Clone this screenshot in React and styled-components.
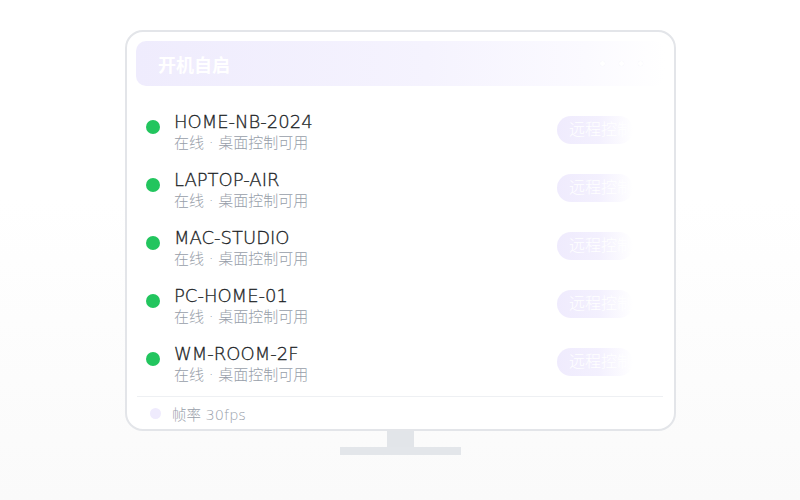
import React from "react";
import styled, { createGlobalStyle } from "styled-components";

const GlobalStyle = createGlobalStyle`
  html, body {
    margin: 0;
    padding: 0;
  }
  body {
    background: linear-gradient(180deg, #ffffff 0%, #ffffff 40%, #fafafa 100%);
    min-height: 500px;
    font-family: "DejaVu Sans", "Noto Sans CJK SC", sans-serif;
    font-weight: 200;
  }
`;

const devices = ["HOME-NB-2024", "LAPTOP-AIR", "MAC-STUDIO", "PC-HOME-01", "WM-ROOM-2F"];

function App() {
  return (
    <>
      <GlobalStyle />
      <Page>
        <Monitor>
          <Header>
            <HeaderTitle>开机自启</HeaderTitle>
            <Dots>
              <Dot />
              <Dot />
              <Dot />
            </Dots>
          </Header>
          <List>
            {devices.map((name) => (
              <Row key={name}>
                <Status />
                <Info>
                  <Name>{name}</Name>
                  <Sub>在线 · 桌面控制可用</Sub>
                </Info>
                <RemoteButton>远程控制</RemoteButton>
              </Row>
            ))}
          </List>
          <Footer>
            <FooterDot />
            <FooterText>帧率 30fps</FooterText>
          </Footer>
        </Monitor>
        <Neck />
        <Base />
      </Page>
    </>
  );
}

const Page = styled.div`
  width: 800px;
  height: 500px;
  display: flex;
  flex-direction: column;
  align-items: center;
  padding-top: 30px;
  box-sizing: border-box;
`;

const Monitor = styled.div`
  width: 551px;
  height: 401px;
  box-sizing: border-box;
  border: 2px solid #e3e5e9;
  border-radius: 18px;
  background: #fff;
  padding: 9px 9px 0 9px;
  display: flex;
  flex-direction: column;
  margin-left: 1px;
`;

const Header = styled.div`
  height: 45px;
  border-radius: 10px;
  background: linear-gradient(90deg, #efecfd 0%, #f5f3fe 55%, #fbfaff 85%, #ffffff 100%);
  display: flex;
  align-items: center;
  justify-content: space-between;
  padding: 0 22px 0 22px;
  flex-shrink: 0;
`;

const HeaderTitle = styled.div`
  color: #fff;
  font-size: 18px;
  font-weight: 700;
  font-family: "Noto Sans CJK SC", sans-serif;
`;

const Dots = styled.div`
  display: flex;
  gap: 14px;
  align-items: center;
`;

const Dot = styled.span`
  width: 5px;
  height: 5px;
  border-radius: 50%;
  background: #ffffff;
  box-shadow: 0 0 1px #ecebf5;
`;

const List = styled.div`
  flex: 1;
  padding: 17px 0 3px 0;
  display: flex;
  flex-direction: column;
`;

const Row = styled.div`
  height: 58px;
  display: flex;
  align-items: center;
  padding-left: 10px;
`;

const Status = styled.span`
  width: 14px;
  height: 14px;
  border-radius: 50%;
  background: #22c55e;
  flex-shrink: 0;
  margin-top: -10px;
`;

const Info = styled.div`
  margin-left: 14px;
  flex: 1;
  display: flex;
  flex-direction: column;
  gap: 1px;
`;

const Name = styled.div`
  font-size: 18px;
  line-height: 22px;
  color: #1a1e25;
  -webkit-text-stroke: 0.3px #1a1e25;
`;

const Sub = styled.div`
  font-size: 15px;
  line-height: 19px;
  color: #979ea9;
`;

const RemoteButton = styled.div`
  width: 76px;
  height: 28px;
  margin-right: 32px;
  border-radius: 14px;
  background: linear-gradient(90deg, #efebfd 0%, #f3f0fe 55%, #ffffff 100%);
  color: #fff;
  font-size: 16px;
  line-height: 28px;
  padding-left: 12px;
  box-sizing: border-box;
  white-space: nowrap;
  overflow: hidden;
  margin-top: -4px;
`;

const Footer = styled.div`
  height: 33px;
  border-top: 1px solid #eef0f3;
  display: flex;
  align-items: center;
  padding-left: 13px;
  gap: 11px;
  box-sizing: border-box;
  margin: 0 2px 0 1px;
`;

const FooterDot = styled.span`
  width: 11px;
  height: 11px;
  border-radius: 50%;
  background: #efebfd;
`;

const FooterText = styled.span`
  font-size: 14.5px;
  color: #979ea9;
`;

const Neck = styled.div`
  width: 27px;
  height: 16px;
  background: #e2e5e9;
`;

const Base = styled.div`
  width: 121px;
  height: 8px;
  background: #e3e6ea;
`;

export default App;
